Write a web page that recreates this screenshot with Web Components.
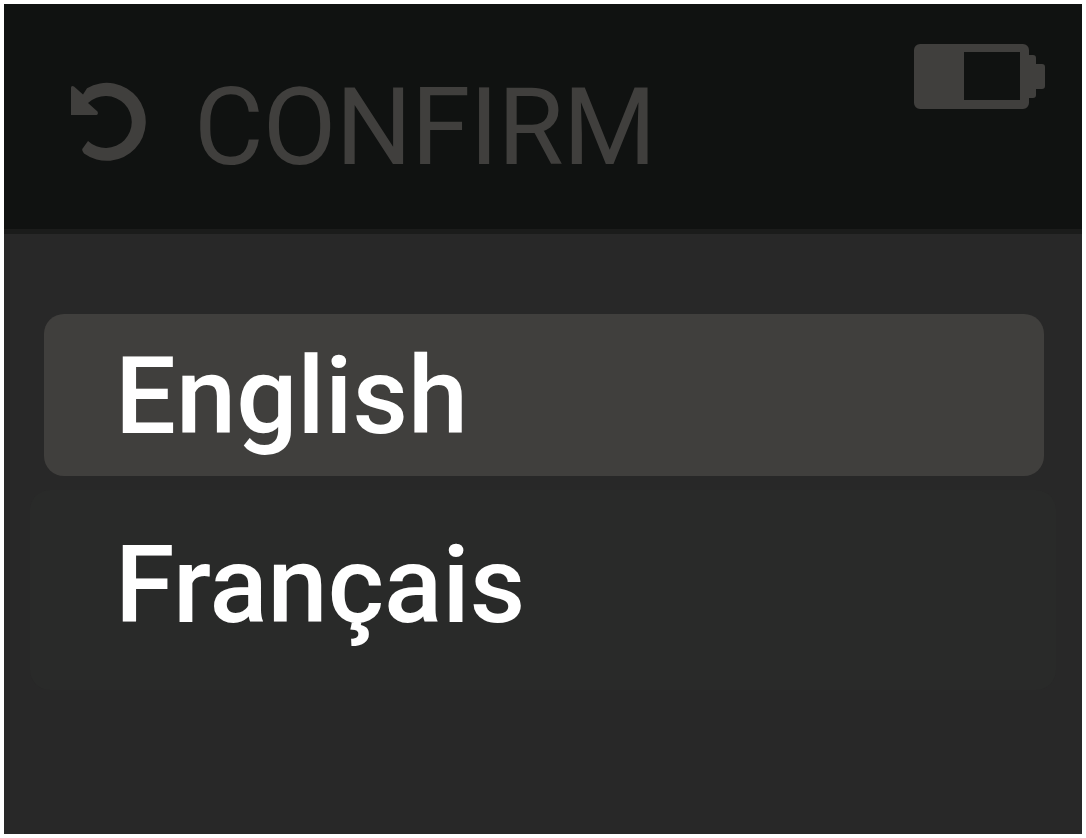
<!DOCTYPE html>
<html>
<head>
<meta charset="utf-8">
<title>Language</title>
<style>
    html, body { margin: 0; height: 100%; background: #fff; }
    body { padding: 4px; box-sizing: border-box; font-family: Roboto, "Liberation Sans", sans-serif; }
</style>
</head>
<body>
<device-screen>
    <top-bar slot="bar" title-text="CONFIRM"></top-bar>
    <language-item selected>English</language-item>
    <language-item>Français</language-item>
</device-screen>

<script>
class DeviceScreen extends HTMLElement {
    constructor() {
        super();
        this.attachShadow({ mode: 'open' }).innerHTML = `
            <style>
                :host { display: block; height: 830px; background: #282828; overflow: hidden; }
                .list { display: flex; flex-direction: column; align-items: center; padding-top: 80px; gap: 14px; }
            </style>
            <slot name="bar"></slot>
            <div class="list"><slot></slot></div>
        `;
    }
}

class TopBar extends HTMLElement {
    constructor() {
        super();
        this.attachShadow({ mode: 'open' }).innerHTML = `
            <style>
                :host { display: block; height: 230px; box-sizing: border-box; background: #101211; border-bottom: 5px solid #1b1c1b; }
                .bar { display: flex; justify-content: space-between; height: 100%; color: #403f3d; }
                .left { display: flex; align-items: center; gap: 46px; padding: 22px 0 0 64px; }
                .title { font-size: 107px; line-height: 1; letter-spacing: -.8px; }
                svg { display: block; fill: currentColor; }
                .back { margin-top: -11px; }
                .battery { margin: 40px 36px 0 0; }
            </style>
            <div class="bar">
                <div class="left">
                    <svg class="back" width="80" height="84" viewBox="0 0 80 84">
                        <path d="M3 8Q3 5 6 6.500L15 14.500L19 8.200A39 39 0 1 1 16 73.500L14.800 71.500Q13.500 69.500 15 68L20 61A26 26 0 1 0 20 23L29.500 31.500Q31 35 27 35H3z"/>
                    </svg>
                    <span class="title"></span>
                </div>
                <svg class="battery" width="132" height="66" viewBox="0 0 132 66">
                    <path fill-rule="evenodd" d="M6 0h103a6 6 0 0 1 6 6v5h4a3 3 0 0 1 3 3v6h6a3 3 0 0 1 3 3v19a3 3 0 0 1-3 3h-6v6a3 3 0 0 1-3 3h-4v5a6 6 0 0 1-6 6H6a6 6 0 0 1-6-6V6a6 6 0 0 1 6-6zM50 8v48h56V8z"/>
                </svg>
            </div>
        `;
        this.shadowRoot.querySelector('.title').textContent = this.getAttribute('title-text');
    }
}

class LanguageItem extends HTMLElement {
    constructor() {
        super();
        this.attachShadow({ mode: 'open' }).innerHTML = `
            <style>
                :host { display: block; box-sizing: border-box; width: 1026px; height: 200px; padding: 0 0 0 85px; border-radius: 20px; background: #292a29; color: #fff; font-size: 108px; font-weight: 500; line-height: 190px; }
                :host([selected]) { width: 1000px; height: 162px; margin-left: 2px; padding-left: 71px; background: #403f3d; line-height: 164px; }
            </style>
            <slot></slot>
        `;
    }
}

customElements.define('device-screen', DeviceScreen);
customElements.define('top-bar', TopBar);
customElements.define('language-item', LanguageItem);
</script>
</body>
</html>
